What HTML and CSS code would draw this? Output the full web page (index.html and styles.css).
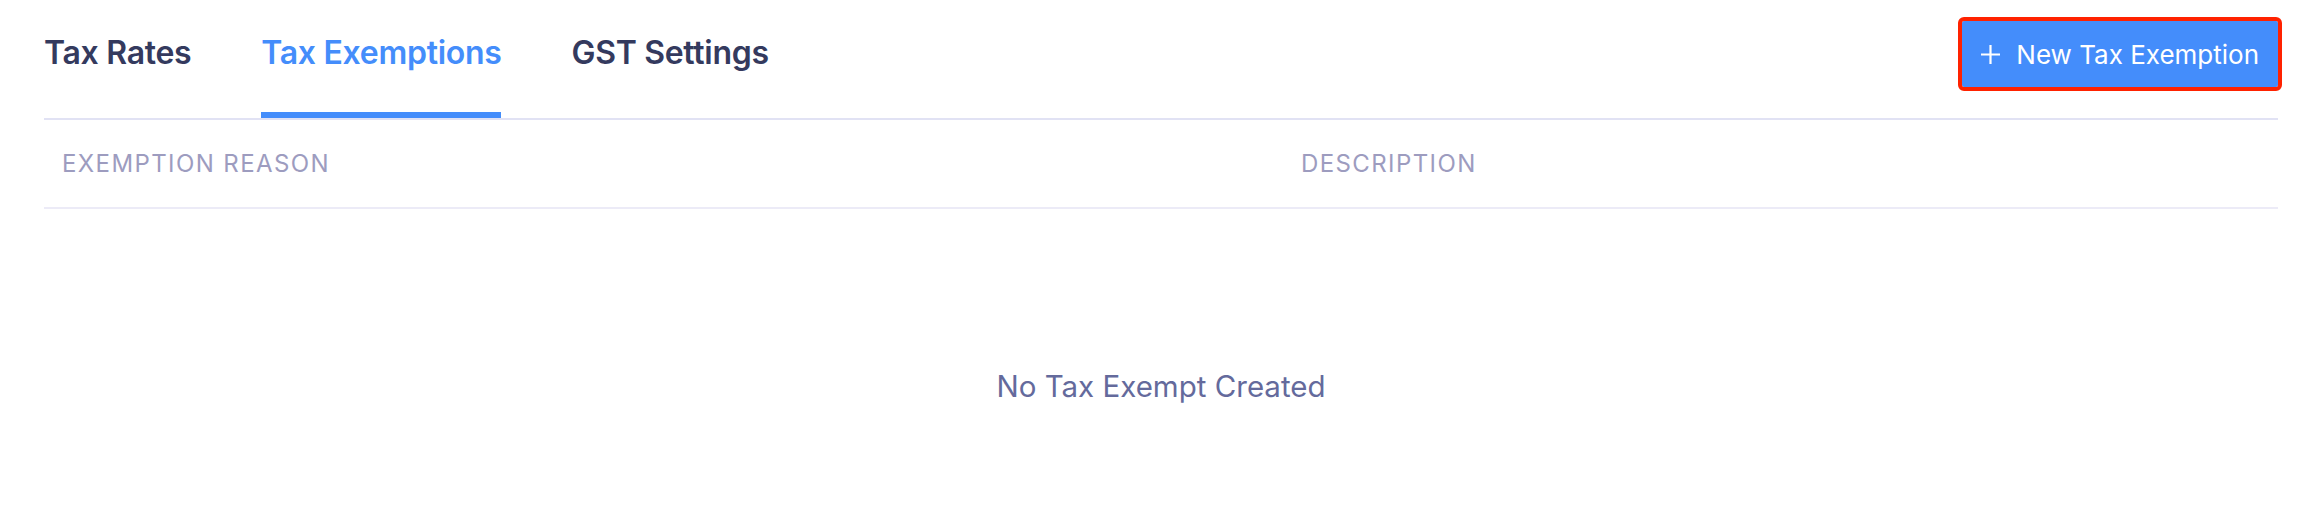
FILE: index.html
```html
<!DOCTYPE html>
<html lang="en">
<head>
    <meta charset="UTF-8">
    <meta name="viewport" content="width=device-width, initial-scale=1.0">
    <title>Taxes</title>
    <link rel="stylesheet" href="styles.css">
</head>
<body>
    <div class="settings-page">
        <div class="toolbar">
            <div class="tabs">
                <div class="tab">Tax Rates</div>
                <div class="tab active">Tax Exemptions</div>
                <div class="tab">GST Settings</div>
            </div>
            <button class="new-btn">
                <svg class="plus" width="19" height="19" viewBox="0 0 19 19">
                    <path d="M9.5 0 V19 M0 9.5 H19" stroke="#fff" stroke-width="2.2" fill="none"/>
                </svg>
                <span>New Tax Exemption</span>
            </button>
        </div>

        <div class="table-head">
            <div class="col">Exemption Reason</div>
            <div class="col">Description</div>
        </div>

        <div class="empty">No Tax Exempt Created</div>
    </div>
</body>
</html>
```

FILE: styles.css
```css
:root {
    --text-dark: #343a5e;
    --primary: #448dfb;
    --muted: #9d9cbf;
    --line: #e1e2f4;
}

* {
    margin: 0;
    padding: 0;
    box-sizing: border-box;
}

body {
    font-family: 'Inter', 'Noto Sans', sans-serif;
    background: #fff;
    color: var(--text-dark);
}

.settings-page {
    padding: 0 40px 0 44px;
}

/* Tabs + action button */
.toolbar {
    display: flex;
    justify-content: space-between;
    align-items: flex-start;
    border-bottom: 2px solid var(--line);
}

.tabs {
    display: flex;
    gap: 70px;
}

.tab {
    font-size: 32px;
    font-weight: 600;
    line-height: 40px;
    letter-spacing: -0.3px;
    padding: 33px 0 39px;
    border-bottom: 6px solid transparent;
}

.tab.active {
    color: var(--primary);
    border-bottom-color: var(--primary);
}

.new-btn {
    margin-top: 21px;
    height: 66px;
    display: flex;
    align-items: center;
    gap: 16px;
    padding: 0 19px;
    background: var(--primary);
    color: #fff;
    border: none;
    border-radius: 2px;
    outline: 4px solid #ff2200;
    font-family: inherit;
    font-size: 26px;
    cursor: pointer;
}

/* Table header */
.table-head {
    display: grid;
    grid-template-columns: 1239px 1fr;
    height: 89px;
    align-items: center;
    border-bottom: 2px solid #ecebf7;
}

.table-head .col {
    padding-left: 18px;
    text-transform: uppercase;
    font-size: 24px;
    letter-spacing: 1.4px;
    color: var(--muted);
}

.empty {
    text-align: center;
    padding-top: 157px;
    font-size: 29.5px;
    line-height: 40px;
    color: #646a9c;
}
```
